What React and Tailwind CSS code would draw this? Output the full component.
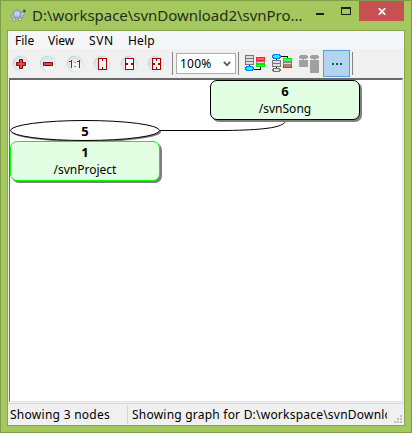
import React from "react";

const MENUS = [
  { label: "File", cls: "w-[33px]" },
  { label: "View", cls: "w-[41px]" },
  { label: "SVN", cls: "w-[39px] tracking-[0.6px]" },
  { label: "Help", cls: "w-[40px] tracking-[0.2px]" },
];

function Turtle() {
  return (
    <svg width="16" height="13" viewBox="0 0 16 13" className="shrink-0">
      <path d="M.5 7 L3 5 L4 8 L12 8 L11 10 L5 10 L3 9Z" fill="#e8e4dc" stroke="#8a8078" strokeWidth=".8" />
      <path d="M3.2 7.500 Q2.600 1.200 7.200 1 Q11.600 1.200 11 7.500 Q7 9.600 3.200 7.500Z" fill="#a9c3f3" stroke="#7388bd" strokeWidth=".9" />
      <path d="M5 3.200h4v3h-4z" fill="#bdd4fb" />
      <path d="M10.500 7.500 L11.500 3.500 L14.300 3.200 L14.100 5.400 L12.800 6 L12 9Z" fill="#dfe4e8" stroke="#78828e" strokeWidth=".8" />
      <path d="M13.200 .8h2.300v2.400h-2.300z" fill="#235068" />
      <path d="M3 9.400h2.400v2.400H2.400zM8.400 9.400h2.800v2.200H9z" fill="#f3efe9" stroke="#8b827b" strokeWidth=".7" />
    </svg>
  );
}

function ToolIcon({ kind }) {
  return (
    <svg width="18" height="18" viewBox="0 0 18 18" className="shrink-0">
      <circle cx="9" cy="9" r="8.600" fill="#dce7ec" />
      <path d="M1.200 10A8 8 0 0 1 10 1.200" fill="none" stroke="#c3d3da" />
      <ellipse cx="10.500" cy="11" rx="6" ry="5.500" fill="#edf4f6" />
      {kind === "plus" && <path d="M7.500 4.500h3v3h3v3h-3v3h-3v-3h-3v-3h3z" fill="#e04a4a" stroke="#8c0000" />}
      {kind === "minus" && <path d="M4.500 7.500h9v3h-9z" fill="#e04a4a" stroke="#8c0000" />}
      {kind === "one" && (
        <g shapeRendering="crispEdges">
          <path d="M5.500 5v8M3 6.500h2M13.500 5v8M11 6.500h2" stroke="#8c2020" fill="none" />
          <path d="M8 7h2v1H8zM8 11h2v1H8z" fill="#f07070" />
        </g>
      )}
      {kind === "height" && (
        <g shapeRendering="crispEdges">
          <path d="M5.500 3.500h8v11h-8z" fill="#fffafa" stroke="#a80000" />
          <path d="M9 3h1v3H9zM9 12h1v3H9z" fill="#a80000" />
        </g>
      )}
      {kind === "width" && (
        <g shapeRendering="crispEdges">
          <path d="M5.500 3.500h8v11h-8z" fill="#fffafa" stroke="#a80000" />
          <path d="M5 8h3v2H5zM11 8h3v2h-3z" fill="#a80000" />
        </g>
      )}
      {kind === "all" && (
        <g shapeRendering="crispEdges">
          <path d="M5.500 3.500h8v11h-8z" fill="#fffafa" stroke="#a80000" />
          <path d="M9 3h1v3H9zM9 12h1v3H9zM5 8h3v2H5zM11 8h3v2h-3z" fill="#a80000" />
        </g>
      )}
    </svg>
  );
}

function CompareHead() {
  return (
    <svg width="20" height="17" viewBox="0 0 20 17" shapeRendering="crispEdges" className="shrink-0">
      <path d="M.5 .5h8v9h-8zM.5 3.500h8M.5 6.500h8" fill="#dedede" stroke="#777" />
      <path d="M11 2h9v4h-9z" fill="#ff2020" />
      <path d="M12 3h7v2h-7z" fill="#ff6060" />
      <path d="M11.500 6.500h8v2h-8z" fill="#d8d8d8" stroke="#888" />
      <path d="M11 9h9v3h-9z" fill="#00e800" />
      <path d="M12 10h7v1h-7z" fill="#60ff60" />
      <path d="M4.500 10v2M9 14.500h6.500V12" stroke="#000" fill="none" />
      <path d="M1.500 11.500h6v1h1v2h-1v1h-6v-1h-1v-2h1z" fill="#20f0ff" stroke="#0080ff" />
    </svg>
  );
}

function CompareBase() {
  return (
    <svg width="20" height="19" viewBox="0 0 20 19" shapeRendering="crispEdges" className="shrink-0">
      <path d="M4.500 5v13M9 2.500h6.500V5" stroke="#000" fill="none" />
      <path d="M1.500 .5h6v1h1v2h-1v1h-6v-1h-1v-2h1z" fill="#20f0ff" stroke="#0080ff" />
      <path d="M.5 6.500h8v6h-8zM.5 9.500h8" fill="#dedede" stroke="#777" />
      <path d="M1.500 14.500h6v1h1v1h-1v1h-6v-1h-1v-1h1z" fill="#dedede" stroke="#777" />
      <path d="M11 4h9v4h-9z" fill="#00e800" />
      <path d="M12 5h7v2h-7z" fill="#50ff50" />
      <path d="M11.500 8.500h8v2h-8z" fill="#d8d8d8" stroke="#888" />
      <path d="M11 11h9v3h-9z" fill="#ff2020" />
      <path d="M12 11h7v2h-7z" fill="#ff6060" />
    </svg>
  );
}

function DiffDisabled() {
  return (
    <svg width="20" height="18" viewBox="0 0 20 18" shapeRendering="crispEdges" className="shrink-0">
      <path d="M1 0h7v1h1v2H8v1H5v1h4v7H0V5h4V4H1V3H0V1h1zM12 0h7v1h1v2h-1v1h-3v1h4v13h-9V5h4V4h-3V3h-1V1h1z" fill="#a0a0a0" />
    </svg>
  );
}

const Separator = () => <div className="h-[23px] w-px shrink-0 bg-[#858585]" />;

function Node({ rev, path, className }) {
  return (
    <div className={"absolute flex h-[40px] w-[150px] flex-col items-center rounded-[7px] border bg-[#e3ffe3] shadow-[2px_2px_0_#808080] " + className}>
      <span className="mt-[2px] h-[17px] font-['Open_Sans','Noto_Sans',sans-serif] text-[13px] leading-[17px] font-bold text-black">{rev}</span>
      <span className="h-[17px] text-[12px] leading-[17px] text-black">{path}</span>
    </div>
  );
}

export default function App() {
  return (
    <div className="flex h-[433px] w-[412px] flex-col overflow-hidden border border-[#7f9c49] bg-[#a4c85e] px-[6px] pb-[6px] font-['Noto_Sans','Open_Sans',sans-serif] text-black">
      <header className="flex h-[29px] shrink-0 items-start">
        <div className="flex w-[24px] shrink-0 pt-[8px] pl-[3px]"><Turtle /></div>
        <h1 className="w-[280px] shrink-0 pt-[4px] pl-px text-[15px] leading-[21px] tracking-[-0.03px] whitespace-nowrap text-[#24301c]">D:\workspace\svnDownload2\svnPro...</h1>
        <div className="flex h-[20px] flex-1">
          <div className="w-[18px] pt-[12px] pl-[5px]"><div className="h-[2px] w-[8px] bg-[#1c2410]" /></div>
          <div className="flex w-[30px] justify-center pt-[6px] pl-[3px]"><div className="h-[8px] w-[10px] border border-t-2 border-[#1c2410]" /></div>
          <div className="flex h-[20px] w-[45px] shrink-0 items-center justify-center bg-[#c75050] pl-px">
            <svg width="8" height="7" viewBox="0 0 8 7"><path d="M.8.2 7.200 6.800M7.200.2.8 6.800" stroke="#fff" strokeWidth="1.800" /></svg>
          </div>
        </div>
      </header>

      <main className="flex min-h-0 flex-1 flex-col border border-[#87a74c] bg-[#f0f0f0]">
        <nav className="flex h-[18px] shrink-0 bg-[#f5f6f7] pl-[7px] text-[12px] leading-[20px]">
          {MENUS.map((m) => <span key={m.label} className={m.cls}>{m.label}</span>)}
        </nav>

        <div className="flex h-[29px] shrink-0 items-center">
          <div className="flex gap-[9px] pt-px pl-[4px]">
            <ToolIcon kind="plus" /><ToolIcon kind="minus" /><ToolIcon kind="one" />
            <ToolIcon kind="height" /><ToolIcon kind="width" /><ToolIcon kind="all" />
          </div>
          <div className="ml-[7px]"><Separator /></div>
          <div className="ml-[3px] flex h-[21px] w-[60px] shrink-0 items-center justify-between border border-[#acacac] bg-white pt-px pr-[4px] pl-[3px] text-[12px] tracking-[0.2px]">
            <span>100%</span>
            <svg width="8" height="6" viewBox="0 0 8 6"><path d="M.8.8 4 4.200 7.200.8" fill="none" stroke="#555" strokeWidth="1.700" /></svg>
          </div>
          <div className="ml-[2px]"><Separator /></div>
          <div className="ml-[6px] flex items-center gap-[7px]">
            <CompareHead /><CompareBase />
            <div className="pt-px"><DiffDisabled /></div>
          </div>
          <div className="ml-[4px] flex h-[27px] w-[27px] shrink-0 items-center justify-center gap-[2px] border border-[#569de5] bg-[#b4d4f1]">
            <i className="h-[2px] w-[2px] bg-[#006838]" /><i className="h-[2px] w-[2px] bg-[#006838]" /><i className="h-[2px] w-[2px] bg-[#006838]" />
          </div>
          <div className="ml-[2px]"><Separator /></div>
        </div>

        <section className="relative mr-px ml-px h-[324px] shrink-0 overflow-hidden border border-t-2 border-t-[#696969] border-r-[#e3e3e3] border-b-[#e3e3e3] border-l-[#696969] bg-white">
          <svg width="392" height="321" viewBox="0 0 392 321" className="absolute top-0 left-0">
            <path d="M149.500 50.500H216C250 50 274 48 275.500 41" fill="none" stroke="#000" />
            <ellipse cx="76.500" cy="52" rx="74.500" ry="10" fill="#808080" />
            <ellipse cx="75" cy="50.500" rx="74.500" ry="10" fill="#fff" stroke="#000" />
          </svg>
          <span className="absolute top-[43px] left-0 w-[150px] text-center font-['Open_Sans','Noto_Sans',sans-serif] text-[13px] leading-[17px] font-bold">5</span>
          <Node rev="6" path="/svnSong" className="top-0 left-[200px] border-black" />
          <Node rev="1" path="/svnProject" className="top-[61px] left-0 border-[#00ff00]" />
        </section>

        <footer className="mt-px flex flex-1 items-center border-t border-[#d7d7d7] text-[12px] whitespace-nowrap">
          <span className="w-[119px] shrink-0 pl-[2px] tracking-[0.27px]">Showing 3 nodes</span>
          <div className="h-[19px] w-px shrink-0 bg-[#d5d5d5]" />
          <span className="w-[259px] shrink-0 overflow-hidden pl-[4px] tracking-[0.22px]">Showing graph for D:\workspace\svnDownload2</span>
          <svg width="9" height="9" viewBox="0 0 9 9" className="mt-[10px] ml-[7px] shrink-0" fill="#bdbdbd">
            <path d="M6 0h2v2H6zM3 3h2v2H3zM6 3h2v2H6zM0 6h2v2H0zM3 6h2v2H3zM6 6h2v2H6z" />
          </svg>
        </footer>
      </main>
    </div>
  );
}
